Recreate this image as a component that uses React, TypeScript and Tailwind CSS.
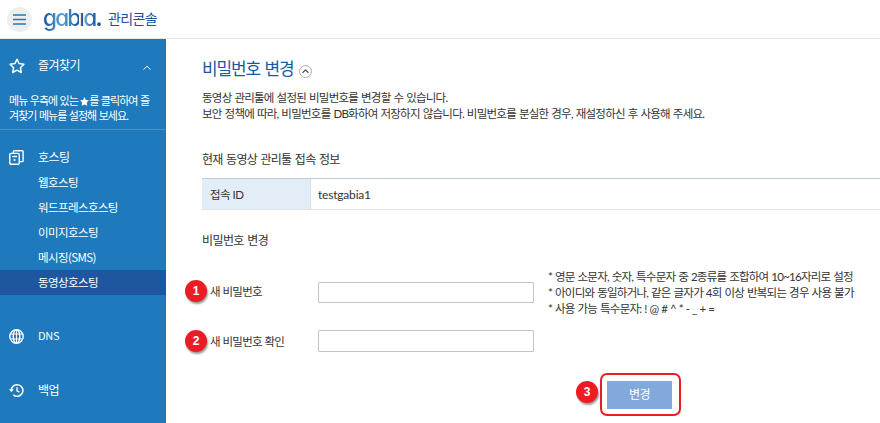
import type { ReactNode } from "react";

const hostingItems = ["웹호스팅", "워드프레스호스팅", "이미지호스팅", "메시징(SMS)", "동영상호스팅"];

function Marker({ n, className }: { n: number; className: string }) {
  return (
    <span
      className={`absolute flex h-[22px] w-[22px] items-center justify-center rounded-full bg-[#ec1c24] font-['Liberation_Sans',sans-serif] text-[12px] leading-none font-bold tracking-normal text-white shadow-[1px_2px_2px_rgba(0,0,0,0.4)] ${className}`}
    >
      {n}
    </span>
  );
}

function ServersIcon() {
  return (
    <svg width="15" height="15" viewBox="0 0 15 15" fill="none" stroke="currentColor" strokeWidth="1.4">
      <rect x="0.8" y="3.4" width="9.4" height="10.8" rx="1" />
      <path d="M4.4 3V1.6q0-.8.8-.8h8q.9 0 .9.8v9.2q0 .8-.9.8h-2.6" />
      <path d="M3 6.5h5" />
      <path d="M4.6 10h1.8" strokeWidth="1.8" />
    </svg>
  );
}

function GlobeIcon() {
  return (
    <svg width="15" height="15" viewBox="0 0 15 15" fill="none" stroke="currentColor" strokeWidth="1.4">
      <circle cx="7.5" cy="7.5" r="6.7" />
      <ellipse cx="7.5" cy="7.5" rx="3.3" ry="6.7" />
      <path d="M7.5.8v13.4M1.3 5h12.4M1.3 10h12.4" strokeWidth="1.1" />
    </svg>
  );
}

function BackupIcon() {
  return (
    <svg width="15" height="15" viewBox="0 0 15 15" fill="none" stroke="currentColor" strokeWidth="1.5">
      <path d="M2.3 7.5A5.8 5.8 0 1 1 4.3 11.9" />
      <path d="M0 6.3h4.8L2.4 9.2Z" fill="currentColor" stroke="none" />
      <path d="M8 4.2v3.6l2.4 1.4" strokeWidth="1.4" />
    </svg>
  );
}

function StarIcon() {
  return (
    <svg width="16" height="16" viewBox="0 0 16 16" fill="none" stroke="currentColor" strokeWidth="1.5" strokeLinejoin="round">
      <path d="M8 1.2l2.1 4.4 4.8.7-3.5 3.4.9 4.8L8 12.2l-4.3 2.3.9-4.8L1.1 6.3l4.8-.7Z" />
    </svg>
  );
}

function MenuHeading({ icon, children }: { icon: ReactNode; children: ReactNode }) {
  return (
    <div className="flex h-[25px] items-center pl-[9px] text-[12px] tracking-[-0.5px]">
      <span className="flex w-[29px] shrink-0">{icon}</span>
      <span>{children}</span>
    </div>
  );
}

export default function App() {
  return (
    <div className="flex h-[423px] w-[880px] flex-col overflow-hidden bg-white font-[Lato,'Noto_Sans_CJK_KR',sans-serif] text-[11.5px] tracking-[-0.75px] text-[#333]">
      <header className="flex h-[39px] shrink-0 items-center border-b border-[#e5e5e5] pl-[7px]">
        <button className="flex h-[25px] w-[25px] items-center justify-center rounded-full bg-[#eee]">
          <svg width="13" height="11" viewBox="0 0 13 11" stroke="#1e79bd" strokeWidth="1.7">
            <path d="M0 1h13M0 5.5h13M0 10h13" />
          </svg>
        </button>
        <div className="ml-[11px] flex h-[36px] w-[65px] items-center pb-[2px] font-[Inter,sans-serif] text-[22.5px] leading-[30px] font-medium tracking-[-1.8px] text-[#1859a5] [font-feature-settings:'cv11']">
          <span className="bg-linear-to-r from-[#17539d] via-[#5fa0d2] to-[#1859a5] bg-clip-text text-transparent">gab</span>
          <span className="[clip-path:inset(10px_0_0_0)]">i</span>
          <span className="bg-linear-to-r from-[#7fb2dc] to-[#1859a5] to-60% bg-clip-text pr-[2px] text-transparent">
            a<b>.</b>
          </span>
        </div>
        <span className="text-[14px] leading-[20px] tracking-[-0.6px] text-[#17509b]">관리콘솔</span>
      </header>
      <div className="flex min-h-0 flex-1">
        <nav className="w-[166px] shrink-0 bg-[#1e79bd] text-white">
          <div className="flex h-[91px] flex-col border-b border-[#4594cb] pt-[14px]">
            <div className="flex">
              <MenuHeading icon={<StarIcon />}>즐겨찾기</MenuHeading>
              <svg className="mt-[12px] ml-auto mr-[15px]" width="8" height="6" viewBox="0 0 8 6" fill="none" stroke="currentColor">
                <path d="M.6 4.6 4 1.2l3.4 3.4" />
              </svg>
            </div>
            <p className="mt-[15px] pl-[9px] text-[11px] leading-[15px] tracking-[-0.95px] [word-spacing:0.5px] whitespace-nowrap">
              메뉴 우측에 있는{" "}
              <svg className="inline-block align-[-1px]" width="9" height="9" viewBox="0 0 10 10" fill="currentColor">
                <path d="M5 0l1.6 3.2 3.4.5-2.4 2.5.5 3.6L5 8.2 1.9 9.8l.5-3.6L0 3.7l3.4-.5Z" />
              </svg>
              를 클릭하여 즐
              <br />
              겨찾기 메뉴를 설정해 보세요.
            </p>
          </div>
          <div className="pt-[15px]">
            <MenuHeading icon={<ServersIcon />}>호스팅</MenuHeading>
            <ul className="font-['Noto_Sans_CJK_KR',sans-serif] tracking-[-0.6px]">
              {hostingItems.map((item) => (
                <li
                  key={item}
                  className={`flex h-[25px] items-center pt-px pl-[38px] ${item === "동영상호스팅" ? "bg-[#1e569f]" : ""} ${item === "메시징(SMS)" ? "tracking-[-0.6px]" : ""}`}
                >
                  {item}
                </li>
              ))}
            </ul>
          </div>
          <div className="mt-[29px]">
            <MenuHeading icon={<GlobeIcon />}>
              <span className="block pb-[2px] font-['Noto_Sans_CJK_KR',sans-serif] text-[11px] tracking-[-0.2px]">DNS</span>
            </MenuHeading>
          </div>
          <div className="mt-[29px]">
            <MenuHeading icon={<BackupIcon />}>백업</MenuHeading>
          </div>
        </nav>
        <main className="min-w-0 flex-1 overflow-hidden pl-[36px] whitespace-nowrap">
          <div className="mt-[17px] flex h-[26px] items-center">
            <h1 className="text-[17px] leading-[24px] tracking-[-1.1px] text-[#1859a5] [word-spacing:1px]">비밀번호 변경</h1>
            <svg className="mt-[4px] ml-[5px]" width="13" height="13" viewBox="0 0 13 13" fill="none">
              <circle cx="6.5" cy="6.5" r="6" stroke="#aaa" />
              <path d="M3.6 7.8 6.5 4.9l2.9 2.9" stroke="#555" strokeWidth="1.3" />
            </svg>
          </div>
          <div className="mt-[8px] leading-[16px] [word-spacing:0.7px]">
            <p>동영상 관리툴에 설정된 비밀번호를 변경할 수 있습니다.</p>
            <p>보안 정책에 따라, 비밀번호를 DB화하여 저장하지 않습니다. 비밀번호를 분실한 경우, 재설정하신 후 사용해 주세요.</p>
          </div>
          <h2 className="mt-[29px] text-[12px] leading-[18px] tracking-[-0.7px] [word-spacing:1px]">현재 동영상 관리툴 접속 정보</h2>
          <dl className="mt-[9px] flex h-[32px] items-stretch border-t border-b border-t-[#bfccd7] border-b-[#dfe3e7]">
            <dt className="flex w-[109px] items-center border-r border-[#d9e1e8] bg-[#e2edf7] pt-px pl-[8px] tracking-[-0.5px]">접속 ID</dt>
            <dd className="flex items-center pt-px pl-[7px] text-[12px] tracking-[-0.2px]">testgabia1</dd>
          </dl>
          <h2 className="mt-[22px] text-[12px] leading-[18px] tracking-[-0.6px] [word-spacing:1px]">비밀번호 변경</h2>
          <div className="relative mt-[19px] flex h-[47px]">
            <Marker n={1} className="top-[11px] left-[-17px]" />
            <label className="w-[116px] pt-[15px] pl-[8px] leading-[16px] [word-spacing:0.5px]">새 비밀번호</label>
            <input className="mt-[13px] h-[21px] w-[216px] rounded-[1px] border border-[#c4c4c4]" />
            <ul className="ml-[14px] leading-[16px] [word-spacing:0.65px]">
              <li>* 영문 소문자, 숫자, 특수문자 중 2종류를 조합하여 10~16자리로 설정</li>
              <li>* 아이디와 동일하거나, 같은 글자가 4회 이상 반복되는 경우 사용 불가</li>
              <li>* 사용 가능 특수문자: ! @ # ^ * - _ + =</li>
            </ul>
          </div>
          <div className="relative mt-[2px] flex h-[47px]">
            <Marker n={2} className="top-[12px] left-[-17px]" />
            <label className="w-[116px] pt-[16px] pl-[8px] leading-[16px] [word-spacing:0.5px]">새 비밀번호 확인</label>
            <input className="mt-[12px] h-[22px] w-[216px] rounded-[1px] border border-[#c4c4c4]" />
          </div>
          <div className="relative mt-[8px] ml-[398px] flex h-[43px] w-[81px] items-center rounded-[7px] border-2 border-[#ec1c24] pl-[5px]">
            <Marker n={3} className="top-[6px] left-[-26px]" />
            <button className="h-[28px] w-[65px] bg-[#82a9dc] pt-px text-[12px] tracking-[-0.5px] text-white">변경</button>
          </div>
        </main>
      </div>
    </div>
  );
}
